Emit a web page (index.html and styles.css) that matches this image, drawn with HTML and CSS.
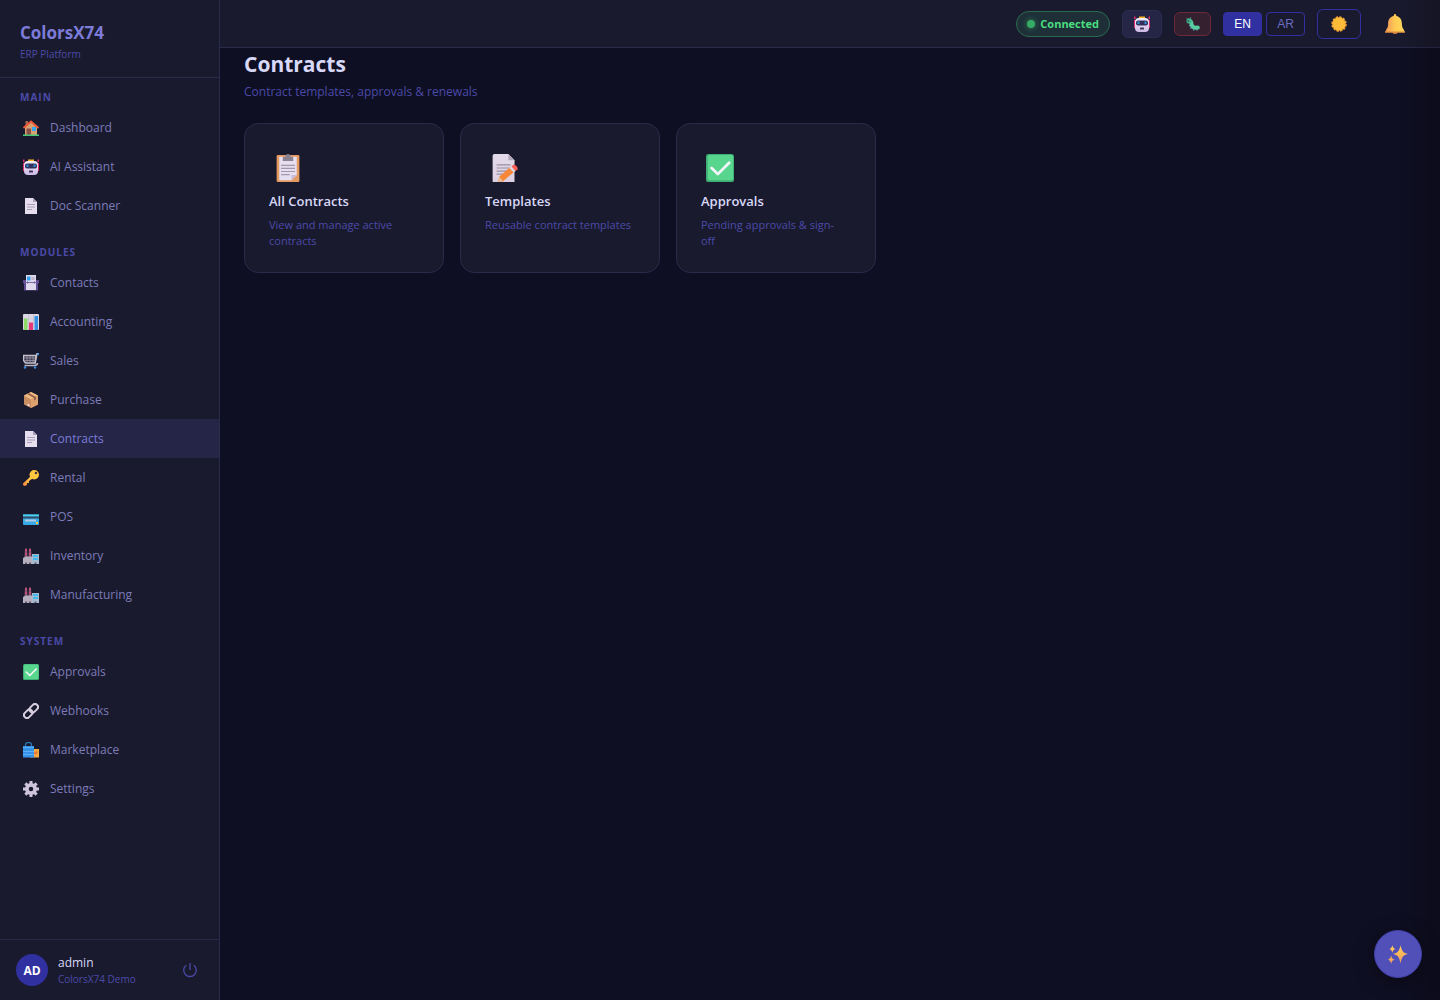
FILE: index.html
```html
<!DOCTYPE html>
<html lang="en">
<head>
<meta charset="utf-8">
<meta name="viewport" content="width=device-width, initial-scale=1">
<title>Contracts - ColorsX74</title>
<link rel="stylesheet" href="styles.css">
</head>
<body>
<svg class="sprite" aria-hidden="true">
  <defs>
    <linearGradient id="g-gold" x1="0" y1="0" x2="0" y2="1"><stop offset="0" stop-color="#ffd25a"/><stop offset="1" stop-color="#f79a5c"/></linearGradient>
    <linearGradient id="g-bell" x1="0" y1="0" x2="1" y2="0"><stop offset="0" stop-color="#f59a58"/><stop offset="0.500" stop-color="#ffcb52"/><stop offset="1" stop-color="#ffd95c"/></linearGradient>
    <linearGradient id="g-key" x1="1" y1="0" x2="0" y2="1"><stop offset="0" stop-color="#ffe04a"/><stop offset="1" stop-color="#f5803c"/></linearGradient>
    <linearGradient id="g-face" x1="0" y1="0" x2="0" y2="1"><stop offset="0" stop-color="#f4eefa"/><stop offset="1" stop-color="#cdb9e6"/></linearGradient>
    <linearGradient id="g-paper" x1="0" y1="0" x2="0" y2="1"><stop offset="0" stop-color="#e2dbea"/><stop offset="1" stop-color="#dccfe2"/></linearGradient>
    <symbol id="i-home" viewBox="0 0 32 32">
      <path d="M5 2h5v10H5z" fill="#a4684e"/>
      <path d="M4 15 16 4l12 11v15H4z" fill="#dba070"/>
      <path d="M7 17h9v13H7z" fill="#8b5148"/>
      <path d="M18 14h8v8h-8z" fill="#35a7f2"/>
      <path d="M2 15 16 3l14 12" fill="none" stroke="#f0583c" stroke-width="3.500" stroke-linecap="round"/>
      <path d="M0 29h32v3H0z" fill="#44c97b"/>
    </symbol>
    <symbol id="i-robot" viewBox="0 0 32 32">
      <path d="M0 1h3v5H0zM29 1h3v5h-3zM0 8h4v16H0zM28 8h4v16h-4z" fill="#e02f6c"/>
      <path d="M10 1h12v5H10z" fill="#f9b625"/>
      <rect x="2" y="4" width="28" height="28" rx="8" fill="url(#g-face)"/>
      <rect x="4" y="9" width="24" height="10" rx="4" fill="#33305c"/>
      <path d="M7 11h4v5H7zM21 11h4v5h-4z" fill="#2f93cf"/>
      <rect x="12" y="23" width="8" height="4" rx="1" fill="#3d3858"/>
    </symbol>
    <symbol id="i-doc" viewBox="0 0 32 32">
      <path d="M4 0h16l8 8v24H4z" fill="#e6deef"/>
      <path d="M20 0v8h8z" fill="#aaa0b8"/>
      <path d="M8 13h16M8 18h16M8 23h10" stroke="#a79fb4" stroke-width="2"/>
    </symbol>
    <symbol id="i-contacts" viewBox="0 0 32 32">
      <path d="M0 10h32v6l-2 1v14H2V17l-2-1z" fill="#5d4a92"/>
      <path d="M6 0h20v30H6z" fill="#dfd9ec"/>
      <path d="M8 3h7v8H8z" fill="#36a0f0"/>
      <path d="M17 4h6v6h-6z" fill="#bdb5cb"/>
      <path d="M3 15h26" stroke="#7d6aa5" stroke-width="2"/>
      <path d="M9 13v4M23 13v4" stroke="#6a5a90" stroke-width="2"/>
    </symbol>
    <symbol id="i-chart" viewBox="0 0 32 32">
      <rect width="32" height="32" rx="2" fill="#dcd5e3"/>
      <path d="M0 10h32M11 0v32M21 0v32" stroke="#bcb4c6"/>
      <path d="M2 9h7v23H2z" fill="#8ddb66"/>
      <path d="M12 17h8v15h-8z" fill="#e53977"/>
      <path d="M23 4h7v28h-7z" fill="#3490e2"/>
    </symbol>
    <symbol id="i-cart" viewBox="0 0 32 32">
      <path d="M32 1h-4l-4 20" fill="none" stroke="#b9b4c2" stroke-width="3"/>
      <path d="M1 5h25l-2 15H5L1 15z" fill="#37354a" stroke="#c7c3ce" stroke-width="3"/>
      <path d="M8 5v14M14 5v14M20 5v14M2 10h23M3 15h22" stroke="#a6a2b0" stroke-width="1.500"/>
      <path d="M29 20c0 5-4 5-7 5H3" fill="none" stroke="#b9b4c2" stroke-width="3"/>
      <circle cx="4" cy="29" r="2.500" fill="#3d8be0"/><circle cx="24" cy="29" r="2.500" fill="#3d8be0"/>
      <path d="M29 0h3v4h-3z" fill="#3d9cf0"/>
    </symbol>
    <symbol id="i-box" viewBox="0 0 32 32">
      <path d="M16 0 30 7v18l-14 7-14-7V7z" fill="#c98d62"/>
      <path d="M16 0 30 7l-14 8L2 7z" fill="#edbd82"/>
      <path d="M16 15 30 7v18l-14 7z" fill="#dda16d"/>
      <path d="m8 4 14 8v5l4-2v-5L12 2z" fill="#96604c"/>
      <path d="m9 23 4 2v4l-4-2z" fill="#f2dfe0"/>
    </symbol>
    <symbol id="i-key" viewBox="0 0 32 32">
      <path d="M15 13 0 27v3l3 2 5-2v-4h4v-4l7-5z" fill="url(#g-key)"/>
      <circle cx="22.500" cy="9.500" r="9.500" fill="#ffc83d"/>
      <circle cx="26" cy="6" r="2.500" fill="#4a3040"/>
    </symbol>
    <symbol id="i-card" viewBox="0 0 32 32">
      <rect y="11" width="32" height="21" rx="2" fill="#37abea"/>
      <path d="M0 11h32v4H0z" fill="#48d1ee"/>
      <path d="M0 15h32v4H0z" fill="#324a66"/>
      <path d="M4 21h22v4H4z" fill="#b7cbe0"/>
      <path d="M26 26h4v4h-4z" fill="#ffc63b"/>
    </symbol>
    <symbol id="i-factory" viewBox="0 0 32 32">
      <path d="M4 1h4l1 19H3zM12 1h4l1 19h-6z" fill="#8f5672"/>
      <path d="M4 3h4v3H4zM12 3h4v3h-4zM4 10h4v3H4zM12 10h4v3h-4z" fill="#d24b7c"/>
      <path d="M0 20l5-3h13v15H0z" fill="#b6afbd"/>
      <path d="M18 12h14v20H18z" fill="#a6bbcf"/>
      <path d="M20 14h10v4H20zM20 20h10v4H20z" fill="#43b9ed"/>
      <path d="M4 29h4v3H4zM12 29h4v3h-4zM23 29h4v3h-4z" fill="#605970"/>
    </symbol>
    <symbol id="i-check" viewBox="0 0 32 32">
      <rect width="32" height="32" rx="3" fill="#3fae74"/>
      <rect x="2" y="1" width="29" height="29" rx="2" fill="#58d68d"/>
      <path d="m6.500 16 7 7L26.500 10" fill="none" stroke="#f6f4fa" stroke-width="3.200" stroke-linecap="round" stroke-linejoin="round"/>
    </symbol>
    <symbol id="i-link" viewBox="0 0 32 32">
      <g fill="none" stroke="#d8cfdf" stroke-width="4">
        <rect x="-9.500" y="-6" width="19" height="12" rx="6" transform="translate(10.500 21.500) rotate(-45)"/>
        <rect x="-9.500" y="-6" width="19" height="12" rx="6" transform="translate(21.500 10.500) rotate(-45)"/>
      </g>
    </symbol>
    <symbol id="i-bags" viewBox="0 0 32 32">
      <path d="M14 14h18v17H14z" fill="#f5ab3e"/>
      <path d="m22 22 7-5v5l-5 4z" fill="#e2713f"/>
      <path d="M5 9V6c0-7 12-7 12 0v3" fill="none" stroke="#2879b7" stroke-width="2.500"/>
      <path d="M0 8h22v23H0z" fill="#3791e8"/>
      <path d="M0 11h22M0 19h22M0 25h22" stroke="#58b4f6" stroke-width="2"/>
    </symbol>
    <symbol id="i-gear" viewBox="0 0 32 32">
      <g stroke="#cfc5da" stroke-width="6"><path d="M16 0v32M0 16h32M4.700 4.700l22.600 22.600M27.300 4.700 4.700 27.300"/></g>
      <circle cx="16" cy="16" r="12" fill="#cfc5da"/>
      <circle cx="16" cy="16" r="4.500" fill="#1a1a2e"/>
    </symbol>
    <symbol id="i-clipboard" viewBox="0 0 32 32">
      <rect x="3" y="1" width="26" height="31" rx="1.500" fill="#e49a60"/>
      <path d="M6 3h20v21l-6 6H6z" fill="#e6dff0"/>
      <path d="M20 30v-6h6z" fill="#c7bcd9"/>
      <path d="M10 3h3c0-4 6-4 6 0h3v5H10z" fill="#898190"/>
      <path d="M8 13h16M8 16.500h16M8 20h16M8 23.500h10" stroke="#a198ae" stroke-width="1.300"/>
    </symbol>
    <symbol id="i-memo" viewBox="0 0 32 32">
      <path d="M3 2a2 2 0 0 1 2-2h16l7 7v25H3z" fill="url(#g-paper)"/>
      <path d="M21 0v7h7z" fill="#b2a8b9"/>
      <path d="M7.500 12.500h16M7.500 16h16M7.500 19.500h12M7.500 23h8" stroke="#998fa3" stroke-width="1.300"/>
      <path d="m9 32 1.500-6L23 15l5 5-13 11z" fill="#f98739"/>
      <path d="m9 32 1.500-6 4.500 5z" fill="#e8bd9c"/>
      <path d="m22 16 3-2.500 4.500 5.500-2.500 2z" fill="#ded6e3"/>
      <path d="m24.500 14 2-1.500c2-1 6 3 5 5L29 19.500z" fill="#fa6054"/>
    </symbol>
    <symbol id="i-bug" viewBox="0 0 32 32">
      <path d="m4 6-3-4M9 5l2-5" stroke="#49937a" stroke-width="2"/>
      <path d="M7 9c7-1 4 7 7 11 2 4 7 5 13 4" fill="none" stroke="#58cda0" stroke-width="9" stroke-linecap="round" stroke-linejoin="round"/>
      <path d="M7 20l3-1M10 26l3-2M17 31l1-3M25 31v-3" stroke="#61a6c4" stroke-width="3"/>
      <circle cx="7" cy="9" r="6" fill="#41ae8a"/>
      <circle cx="5" cy="9" r="1.800" fill="#25394a"/>
    </symbol>
    <symbol id="i-sun" viewBox="0 0 32 32">
      <circle cx="16" cy="16" r="14" fill="none" stroke="#f09a35" stroke-width="3" stroke-dasharray="5 2.330"/>
      <circle cx="16" cy="16" r="13.500" fill="#fdbb38"/>
    </symbol>
    <symbol id="i-bell" viewBox="0 0 32 32">
      <ellipse cx="16" cy="29" rx="4" ry="3" fill="#d98148"/>
      <path d="M14 3c0-4 4-4 4 0 6 1 9 6 9 12 0 4 1 7 2 9H3c1-2 2-5 2-9C5 9 8 4 14 3z" fill="url(#g-bell)"/>
      <path d="M3 23h26l3 6H0z" fill="url(#g-bell)"/>
      <path d="M0 28h32v2H0z" fill="#d9873f"/>
    </symbol>
    <symbol id="i-sparkles" viewBox="0 0 32 32">
      <path d="M20 2c2 9 4 12 12 14-8 2-10 5-12 15-2-10-4-13-12-15 8-2 10-5 12-14zM7 2c1 4 2 5 5 6-3 1-4 2-5 6-1-4-2-5-5-6 3-1 4-2 5-6zM5 18c1 5 2 6 6 7-4 1-5 2-6 7-1-5-2-6-5-7 3-1 4-2 5-7z" fill="url(#g-gold)"/>
    </symbol>
    <symbol id="i-power" viewBox="0 0 16 16">
      <path d="M8 1v7M4.200 3.200a6.300 6.300 0 1 0 7.600 0" fill="none" stroke="currentColor" stroke-width="1.300"/>
    </symbol>
  </defs>
</svg>

<div class="app">
  <aside class="sidebar">
    <div class="brand">
      <div class="brand-name">ColorsX74</div>
      <div class="brand-sub">ERP Platform</div>
    </div>
    <nav class="nav" aria-label="Primary">
      <section class="nav-section">
        <h2 class="nav-label">MAIN</h2>
        <a class="nav-item" href="#dashboard"><svg class="nav-icon"><use href="#i-home"/></svg>Dashboard</a>
        <a class="nav-item" href="#assistant"><svg class="nav-icon"><use href="#i-robot"/></svg>AI Assistant</a>
        <a class="nav-item" href="#scanner"><svg class="nav-icon"><use href="#i-doc"/></svg>Doc Scanner</a>
      </section>
      <section class="nav-section">
        <h2 class="nav-label">MODULES</h2>
        <a class="nav-item" href="#contacts"><svg class="nav-icon"><use href="#i-contacts"/></svg>Contacts</a>
        <a class="nav-item" href="#accounting"><svg class="nav-icon"><use href="#i-chart"/></svg>Accounting</a>
        <a class="nav-item" href="#sales"><svg class="nav-icon"><use href="#i-cart"/></svg>Sales</a>
        <a class="nav-item" href="#purchase"><svg class="nav-icon"><use href="#i-box"/></svg>Purchase</a>
        <a class="nav-item nav-item-active" href="#contracts" aria-current="page"><svg class="nav-icon"><use href="#i-doc"/></svg>Contracts</a>
        <a class="nav-item" href="#rental"><svg class="nav-icon"><use href="#i-key"/></svg>Rental</a>
        <a class="nav-item" href="#pos"><svg class="nav-icon"><use href="#i-card"/></svg>POS</a>
        <a class="nav-item" href="#inventory"><svg class="nav-icon"><use href="#i-factory"/></svg>Inventory</a>
        <a class="nav-item" href="#manufacturing"><svg class="nav-icon"><use href="#i-factory"/></svg>Manufacturing</a>
      </section>
      <section class="nav-section">
        <h2 class="nav-label">SYSTEM</h2>
        <a class="nav-item" href="#approvals"><svg class="nav-icon"><use href="#i-check"/></svg>Approvals</a>
        <a class="nav-item" href="#webhooks"><svg class="nav-icon"><use href="#i-link"/></svg>Webhooks</a>
        <a class="nav-item" href="#marketplace"><svg class="nav-icon"><use href="#i-bags"/></svg>Marketplace</a>
        <a class="nav-item" href="#settings"><svg class="nav-icon"><use href="#i-gear"/></svg>Settings</a>
      </section>
    </nav>
    <div class="user">
      <div class="avatar">AD</div>
      <div class="user-text">
        <div class="user-name">admin</div>
        <div class="user-org">ColorsX74 Demo</div>
      </div>
      <button class="logout" type="button" aria-label="Log out"><svg class="power"><use href="#i-power"/></svg></button>
    </div>
  </aside>

  <div class="page">
    <header class="topbar">
      <div class="status"><span class="dot"></span>Connected</div>
      <button class="tool tool-ai" type="button" aria-label="AI assistant"><svg class="icon-sm"><use href="#i-robot"/></svg></button>
      <button class="tool tool-bug" type="button" aria-label="Report a bug"><svg class="icon-xs"><use href="#i-bug"/></svg></button>
      <div class="langs">
        <button class="lang lang-on" type="button">EN</button>
        <button class="lang" type="button">AR</button>
      </div>
      <button class="tool tool-theme" type="button" aria-label="Switch theme"><svg class="icon-sm"><use href="#i-sun"/></svg></button>
      <button class="tool tool-bell" type="button" aria-label="Notifications"><svg class="icon-md"><use href="#i-bell"/></svg></button>
    </header>
    <main class="main">
      <h1 class="title">Contracts</h1>
      <p class="subtitle">Contract templates, approvals &amp; renewals</p>
      <div class="cards">
        <a class="card" href="#all">
          <span class="card-icon"><svg class="icon-lg"><use href="#i-clipboard"/></svg></span>
          <h2 class="card-title">All Contracts</h2>
          <p class="card-text">View and manage active contracts</p>
        </a>
        <a class="card" href="#templates">
          <span class="card-icon"><svg class="icon-lg"><use href="#i-memo"/></svg></span>
          <h2 class="card-title">Templates</h2>
          <p class="card-text">Reusable contract templates</p>
        </a>
        <a class="card" href="#pending">
          <span class="card-icon"><svg class="icon-lg"><use href="#i-check"/></svg></span>
          <h2 class="card-title">Approvals</h2>
          <p class="card-text">Pending approvals &amp; sign-<br>off</p>
        </a>
      </div>
    </main>
  </div>
</div>
<div class="edge-shade"></div>
<button class="fab" type="button" aria-label="Open AI assistant"><svg class="icon-fab"><use href="#i-sparkles"/></svg></button>
</body>
</html>
```
FILE: styles.css
```css
:root {
  --bg: #0f0f23;
  --panel: #1a1a2e;
  --line: #2a2a4a;
  --accent: #3030a0;
  --muted: #4a4aa8;
  --soft: #7c7cb8;
  --bright: #d8d8f8;
}

* { box-sizing: border-box; }

body {
  margin: 0;
  background: var(--bg);
  color: var(--bright);
  font-family: "Open Sans", "Noto Sans", sans-serif;
  font-size: 12px;
}

h1, h2, p { margin: 0; }
a { color: inherit; text-decoration: none; }
button { font: inherit; cursor: pointer; }
svg { display: block; flex: none; }

.sprite { position: absolute; width: 0; height: 0; }

.app { display: flex; min-height: 100vh; }

/* Sidebar */
.sidebar {
  display: flex;
  flex-direction: column;
  flex: none;
  width: 220px;
  background: var(--panel);
  border-right: 1px solid var(--line);
}

.brand {
  padding: 20px 20px 15px;
  border-bottom: 1px solid var(--line);
}

.brand-name {
  color: #7c7cd8;
  font-size: 17px;
  font-weight: 700;
  line-height: 26px;
}

.brand-sub {
  color: var(--muted);
  font-size: 10px;
  line-height: 16px;
}

.nav { flex: 1; }
.nav-section { margin-bottom: 8px; }

.nav-label {
  padding: 12px 20px 4px;
  color: var(--muted);
  font-size: 10px;
  font-weight: 700;
  line-height: 14px;
  letter-spacing: 1px;
}

.nav-item {
  display: flex;
  align-items: center;
  gap: 11px;
  height: 39px;
  padding: 0 23px;
  color: var(--soft);
}

.nav-item-active { background: #252547; color: #7c7cd8; }
.nav-icon { width: 16px; height: 16px; }

.user {
  display: flex;
  align-items: center;
  gap: 10px;
  padding: 14px 16px;
  border-top: 1px solid var(--line);
}

.avatar {
  display: grid;
  place-items: center;
  width: 32px;
  height: 32px;
  border-radius: 50%;
  background: var(--accent);
  color: #fff;
  font-weight: 700;
}

.user-text { flex: 1; }
.user-name { line-height: 18px; }
.user-org { color: var(--muted); font-size: 10px; line-height: 14px; }

.logout {
  padding: 5px;
  border: 0;
  background: none;
  color: var(--muted);
}

.power { width: 16px; height: 16px; }

/* Page */
.page { flex: 1; min-width: 0; }

.topbar {
  display: flex;
  align-items: center;
  justify-content: flex-end;
  gap: 12px;
  height: 48px;
  padding: 0 24px;
  background: var(--panel);
  border-bottom: 1px solid var(--line);
}

.status {
  display: flex;
  align-items: center;
  gap: 5px;
  height: 26px;
  padding: 0 10px;
  border: 1px solid #2b6b50;
  border-radius: 13px;
  background: #1e2f38;
  color: #4ade80;
  font-size: 11px;
  font-weight: 700;
}

.dot {
  width: 8px;
  height: 8px;
  border-radius: 50%;
  background: #36ab66;
  box-shadow: 0 0 6px #2c8a56;
}

.tool {
  display: grid;
  place-items: center;
  padding: 0;
  border: 1px solid transparent;
  border-radius: 6px;
  background: none;
}

.tool-ai { width: 40px; height: 28px; border-color: #2c2c52; background: #252545; }
.tool-bug { width: 37px; height: 24px; border-color: #6b2a3a; background: #35202f; }
.tool-theme { width: 44px; height: 30px; border-color: var(--accent); }
.tool-bell { width: 43px; height: 30px; }

.icon-xs { width: 14px; height: 14px; }
.icon-sm { width: 16px; height: 16px; }
.icon-md { width: 20px; height: 20px; }
.icon-lg { width: 28px; height: 28px; }
.icon-fab { width: 20px; height: 20px; }

.langs { display: flex; gap: 4px; }

.lang {
  width: 39px;
  height: 24px;
  padding: 0;
  border: 1px solid var(--accent);
  border-radius: 4px;
  background: none;
  color: #6c6cc0;
  font-family: "Liberation Sans", Arial, sans-serif;
}

.lang-on { background: var(--accent); color: #fff; }

.main { padding: 0 24px 24px; }

.title {
  font-size: 21px;
  font-weight: 700;
  line-height: 33px;
}

.subtitle {
  margin-bottom: 20px;
  color: var(--muted);
  line-height: 22px;
}

.cards {
  display: grid;
  grid-template-columns: repeat(auto-fill, 200px);
  gap: 16px;
}

.card {
  min-height: 150px;
  padding: 24px 24px 23px;
  border: 1px solid var(--line);
  border-radius: 14px;
  background: var(--panel);
}

.card-icon {
  display: grid;
  place-items: center;
  width: 38px;
  height: 40px;
  margin-bottom: 4px;
}

.card-title {
  margin-bottom: 7px;
  font-size: 13px;
  font-weight: 600;
  line-height: 18px;
}

.card-text {
  color: var(--muted);
  font-size: 11px;
  line-height: 16px;
}

/* Shade along the window's right edge */
.edge-shade {
  position: fixed;
  top: 0;
  right: 0;
  bottom: 0;
  width: 40px;
  background: linear-gradient(to right, transparent, rgba(0, 0, 0, 0.2));
  pointer-events: none;
}

.fab {
  position: fixed;
  right: 18px;
  bottom: 22px;
  display: grid;
  place-items: center;
  width: 48px;
  height: 48px;
  padding: 0;
  border: 1px solid #4040a8;
  border-radius: 50%;
  background: #5050b8;
  box-shadow: 0 4px 20px rgba(0, 0, 0, 0.4);
}
```
